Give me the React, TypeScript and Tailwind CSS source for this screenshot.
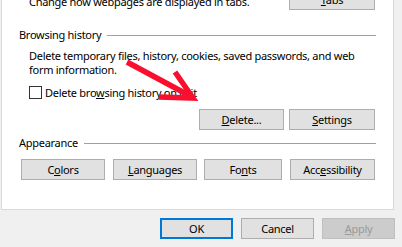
import React from "react";

// Win32 style push button
function Btn({
  children,
  className = "",
  variant = "normal",
}: {
  children: React.ReactNode;
  className?: string;
  variant?: "normal" | "default" | "disabled";
}) {
  const look =
    variant === "default"
      ? "border-2 border-[#0078d7] bg-[#e1e1e1] text-black"
      : variant === "disabled"
      ? "border border-[#bfbfbf] bg-[#cccccc] text-[#9a9a9a]"
      : "border border-[#adadad] bg-[#e1e1e1] text-black";
  return (
    <button
      className={`flex h-[21px] shrink-0 items-center justify-center whitespace-nowrap leading-none ${look} ${className}`}
    >
      {children}
    </button>
  );
}

function GroupHeader({ label }: { label: string }) {
  return (
    <div className="flex h-[16px] items-center gap-[6px] pr-[17px]">
      <span className="whitespace-nowrap">{label}</span>
      <div className="h-px flex-1 bg-[#a0a0a0]" />
    </div>
  );
}

export default function App() {
  return (
    <div className="h-[247px] w-full overflow-hidden bg-[#f0f0f0] font-['Segoe_UI','Noto_Sans',sans-serif] text-[11px] leading-[16px] tracking-[-0.28px] text-black">
      <div className="relative ml-px flex h-[210px] w-[393px] flex-col border-x border-b border-[#d9d9d9] bg-white pl-[17px]">
        {/* tabs row, top is scrolled out of view */}
        <div className="-mt-[11px] flex h-[21px] items-start justify-between pr-[18px]">
          <span className="ml-[10px] mt-[5px] whitespace-nowrap">
            Change how webpages are displayed in tabs.
          </span>
          <Btn className="w-[86px]">
            <span>
              <u>T</u>abs
            </span>
          </Btn>
        </div>

        {/* Browsing history */}
        <div className="mt-[17px]">
          <GroupHeader label="Browsing history" />
        </div>
        <p className="ml-[10px] mt-[6px] whitespace-nowrap leading-[14px]">
          Delete temporary files, history, cookies, saved passwords, and web
          <br />
          form information.
        </p>
        <label className="ml-[10px] mt-[9px] flex h-[13px] items-center gap-[3px]">
          <span className="h-[13px] w-[13px] border border-[#333333] bg-white" />
          <span className="whitespace-nowrap">
            Delete bro<u>w</u>sing history on exit
          </span>
        </label>
        <div className="mt-[10px] flex justify-end gap-[5px] pr-[18px]">
          <Btn className="w-[85px]">
            <span>
              <u>D</u>elete...
            </span>
          </Btn>
          <Btn className="w-[86px]">
            <span>
              <u>S</u>ettings
            </span>
          </Btn>
        </div>

        {/* Appearance */}
        <div className="mt-[5px]">
          <GroupHeader label="Appearance" />
        </div>
        <div className="ml-[2px] mt-[8px] flex">
          <Btn className="w-[84px]">
            <span>
              C<u>o</u>lors
            </span>
          </Btn>
          <Btn className="ml-[8px] w-[84px]">
            <span>
              <u>L</u>anguages
            </span>
          </Btn>
          <Btn className="ml-[7px] w-[78px]">
            <span>
              Fo<u>n</u>ts
            </span>
          </Btn>
          <Btn className="ml-[8px] w-[85px]">
            <span>
              Acc<u>e</u>ssibility
            </span>
          </Btn>
        </div>

        {/* red annotation arrow */}
        <svg
          className="pointer-events-none absolute left-0 top-0"
          width="393"
          height="210"
          viewBox="-1 0 393 210"
        >
          <g stroke="#f8102e" strokeWidth="5.5" fill="none" strokeLinejoin="miter">
            <line x1="124" y1="62" x2="189" y2="97" />
            <polyline points="172,72 190,98 156,97" />
          </g>
        </svg>
      </div>

      {/* dialog buttons */}
      <div className="mt-[8px] flex gap-[8px] pl-[160px]">
        <Btn variant="default" className="w-[73px]">
          OK
        </Btn>
        <Btn className="w-[73px]">Cancel</Btn>
        <Btn variant="disabled" className="w-[73px]">
          <span>
            <u>A</u>pply
          </span>
        </Btn>
      </div>
    </div>
  );
}
